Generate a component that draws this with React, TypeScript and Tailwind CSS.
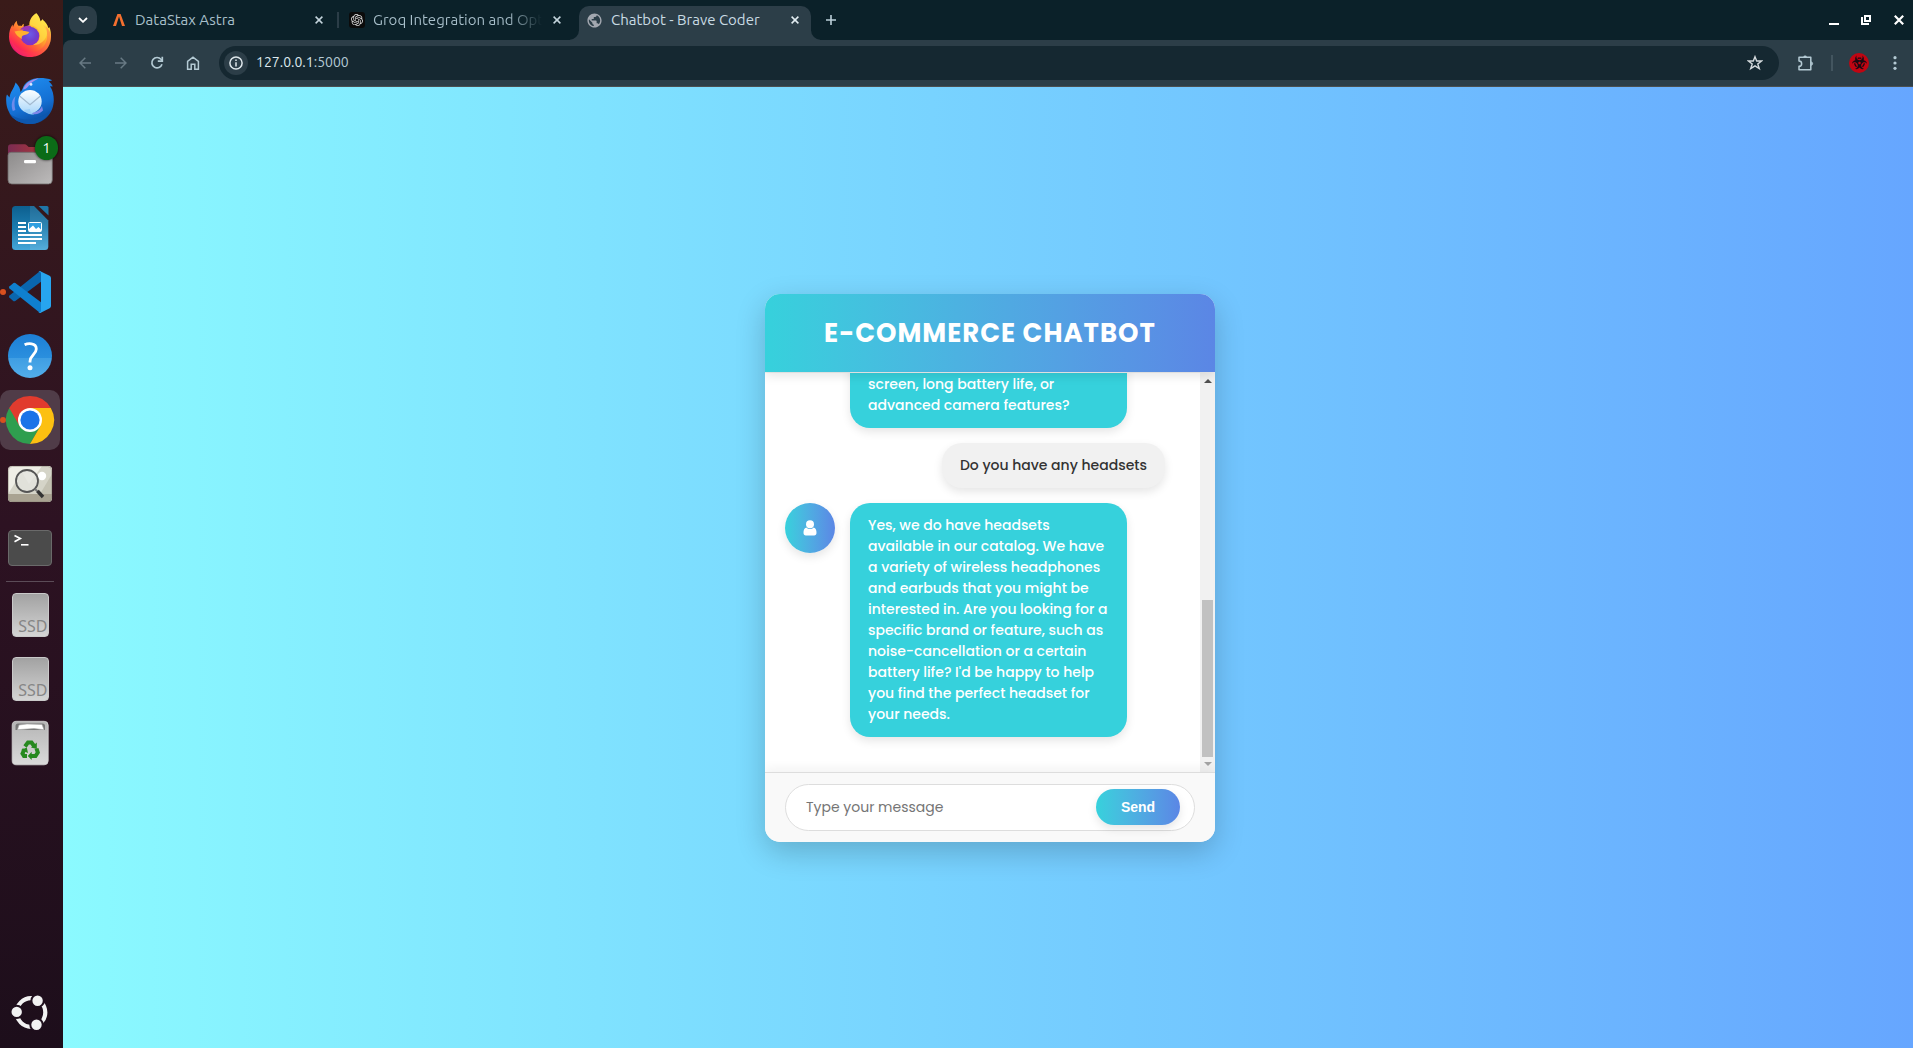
import React from "react";
import type { ReactNode } from "react";
import { FaBiohazard } from "react-icons/fa";
import { MdPublic } from "react-icons/md";
import { SiOpenai } from "react-icons/si";

const UI = "font-['Ubuntu','Noto_Sans',sans-serif]";

/* ---------- Dock icons, each drawn in a 63x64 slot ---------- */

function Slot({ children, active = false, running = false }: { children: ReactNode; active?: boolean; running?: boolean }) {
  return (
    <div className="relative h-16 w-[63px] shrink-0">
      {active && <div className="absolute left-0 top-0.5 h-[60px] w-[60px] rounded-[10px] bg-[#503c48]" />}
      {running && <div className="absolute left-0 top-[29px] h-1.5 w-[6px] rounded-full bg-[#d9501e]" />}
      <svg viewBox="0 0 63 64" className="relative block h-16 w-[63px]">{children}</svg>
    </div>
  );
}

function Firefox() {
  return (
    <Slot>
      <defs>
        <linearGradient id="ff-body" x1="0.85" y1="0.1" x2="0.2" y2="0.95">
          <stop offset="0" stopColor="#fff44f" />
          <stop offset="0.35" stopColor="#ffb62c" />
          <stop offset="0.6" stopColor="#ff6a33" />
          <stop offset="0.82" stopColor="#ff2f4e" />
          <stop offset="1" stopColor="#e0107e" />
        </linearGradient>
        <radialGradient id="ff-globe" cx="0.5" cy="0.4" r="0.6">
          <stop offset="0" stopColor="#6d5be8" />
          <stop offset="0.6" stopColor="#6f3fce" />
          <stop offset="1" stopColor="#8b2fc0" />
        </radialGradient>
      </defs>
      <path
        d="M36.3 9.3C38.5 11.5 40 14.5 40.5 17.5C41.5 16.8 42 16 42.2 15.2C46 18.5 47.8 21 48.2 24C49 23.8 49.2 23.5 49.3 23C50.8 26.5 51.2 30 51 33C50.6 44.5 41.5 53 30 53C18.5 53 9.2 44.5 9 33C8.9 27.5 10.5 23.5 12.5 20.5L13 23C14 20.3 15 18.3 16.8 16.7C16.8 18.7 17.3 20.3 18.5 21.8C19.8 21.6 20.6 21.7 21.7 21.9C22.2 20.8 22.8 20.4 24 19.8C23.3 22 23.8 23.3 24.6 24.3C26 22.2 27.6 21.6 29.3 21.2C29 16.5 32 11.5 36.3 9.3Z"
        fill="url(#ff-body)"
      />
      <path d="M43 21C47 26 48.5 32 46 38C43.5 45 37 48.5 30 48.3C20 48 13 42 11 34C12 46 19 53 30 53C42 53 51 44 51 33C51 28 48 23 43 21Z" fill="#ff3d55" opacity="0.35" />
      <path d="M36.3 9.3C31.5 12.2 29.5 17 30.2 21.2C36 21.5 40 25.5 39.8 31C39.5 37 36 40 31 41C40 42 46.5 36 47 29C47.3 24 45 20 42.2 15.2C42 16 41.5 16.8 40.5 17.5C40 14.5 38.5 11.5 36.3 9.3Z" fill="#ffe14a" opacity="0.65" />
      <circle cx="30" cy="32" r="9.3" fill="url(#ff-globe)" />
      <path d="M14.5 27.6C18 26.3 24.5 26.6 29.3 28C28.7 30 26 30.8 23.8 31.3C22 31.7 21.3 33.2 22 35C18.5 33.5 16.3 31 14.5 27.6Z" fill="#ffb02e" />
      <path d="M20 25.6C22.5 22.5 27 21 31.5 22.2C29.5 23 28.8 24.5 29.4 26.6C26 26 23 25.8 20 25.6Z" fill="#9a35b8" />
    </Slot>
  );
}

function Thunderbird() {
  return (
    <Slot>
      <defs>
        <linearGradient id="tb-body" x1="0.3" y1="0" x2="0.7" y2="1">
          <stop offset="0" stopColor="#1f8df0" />
          <stop offset="0.6" stopColor="#1470d4" />
          <stop offset="1" stopColor="#0a4a9c" />
        </linearGradient>
        <linearGradient id="tb-mail" x1="0" y1="0" x2="0" y2="1">
          <stop offset="0" stopColor="#fdfeff" />
          <stop offset="1" stopColor="#a9d7fa" />
        </linearGradient>
      </defs>
      <path
        d="M15.6 14.6C19 18 20.4 21 20.5 24C22 22.5 22 21.5 22.7 20.5C24.5 14.5 31 10 40 10C44 10 48 10.3 52.3 12.2L48.6 13.6C50.5 15 52 16.5 52.7 18.5L50 18.3C52.6 22 53.8 27 53.8 32C53.6 46 43.5 56 30 56C16 56 6.5 46 6.2 33C6.1 30 6.2 28 7 26.4L9.5 29.5C10.5 23.5 14 20.5 15.6 14.6Z"
        fill="url(#tb-body)"
      />
      <path d="M23 21.5C25 15 31.5 11 39 10.2C33.5 12.7 30 15.5 27.5 19.2C26 20.7 24.5 21.3 23 21.5Z" fill="#a491ee" />
      <path d="M12.8 43C10.6 36.5 12 31.5 15.5 28C14.2 33 14.2 37.5 15.4 42Z" fill="#6f8bea" />
      <path d="M42 38C40 42.5 36 45.5 29 43.5C32 47.3 39 47 43 42.5Z" fill="#7f86e8" />
      <path d="M9 45C17 53 37 55 50 43C44 53 37 56 30 56C21 56 13 52 9 45Z" fill="#0d57ae" />
      <circle cx="30" cy="33.6" r="11.7" fill="url(#tb-mail)" />
      <path d="M24 42C27 46.5 31 46.5 34.5 46.5C31 45.3 30 43.5 30 41Z" fill="#9ccff8" />
      <path d="M19.6 28L30 36.6L40.4 28" fill="none" stroke="#a3b9cf" strokeWidth="1.2" />
      <circle cx="31" cy="16.4" r="1.4" fill="#d9eaff" />
    </Slot>
  );
}

function Files() {
  return (
    <div className="relative h-16 w-[63px] shrink-0">
      <svg viewBox="0 0 63 64" className="block h-16 w-[63px]">
        <defs>
          <linearGradient id="fl-back" x1="0" y1="0" x2="1" y2="0">
            <stop offset="0" stopColor="#7a2b52" />
            <stop offset="1" stopColor="#b93a34" />
          </linearGradient>
          <linearGradient id="fl-front" x1="0" y1="0" x2="1" y2="1">
            <stop offset="0" stopColor="#8d8b8b" />
            <stop offset="1" stopColor="#bdbbbb" />
          </linearGradient>
        </defs>
        <path d="M8 15.5Q8 12.3 11 12.3H24.5Q26 12.3 27 13.4L28.7 15H48Q52 15 52 19V30H8Z" fill="url(#fl-back)" />
        <path d="M8 23.5Q8 20.3 11 20.3H49Q52.3 20.3 52.3 23.5V48Q52.3 52 48.5 52H11.8Q8 52 8 48Z" fill="url(#fl-front)" stroke="#6d6a6a" strokeWidth="0.8" />
        <rect x="24" y="28" width="12" height="3.2" rx="1.2" fill="#fff" />
      </svg>
      <div className={`absolute left-[35px] top-[4px] flex h-6 w-[23px] items-center justify-center rounded-full bg-[#0b6b17] text-[14px] text-white shadow-[0_0_2px_1px_rgba(0,0,0,0.4)] ${UI}`}>1</div>
    </div>
  );
}

function Writer() {
  return (
    <Slot>
      <defs>
        <linearGradient id="wr" x1="0" y1="0" x2="0" y2="1">
          <stop offset="0" stopColor="#0d5f8f" />
          <stop offset="0.5" stopColor="#1b7cb0" />
          <stop offset="1" stopColor="#45a6d8" />
        </linearGradient>
      </defs>
      <path d="M15.5 10H34L48.3 24.5V50.5Q48.3 54 45 54H15.5Q12 54 12 50.5V13.5Q12 10 15.5 10Z" fill="url(#wr)" />
      <path d="M30 10H34L48.3 24.5V50.5Q48.3 54 45 54H30Z" fill="#fff" opacity="0.09" />
      <path d="M38.5 10H47Q48.5 10 48.5 11.5V19.5Z" fill="#1f76a8" />
      <g fill="#fff">
        <rect x="18" y="26" width="8" height="2" />
        <rect x="18" y="30" width="8" height="2" />
        <rect x="18" y="34" width="8" height="2" />
        <rect x="18" y="38" width="24" height="2" />
        <rect x="18" y="42" width="24" height="2" />
        <rect x="18" y="46" width="18" height="2" />
      </g>
      <rect x="28.5" y="26.5" width="13" height="9" rx="1" fill="#2f9fe0" stroke="#fff" />
      <path d="M29 35V33L33 29.5L36 33L38.5 31L41 33.5V35.5H29Z" fill="#fff" />
    </Slot>
  );
}

function VsCode() {
  return (
    <Slot running>
      <path d="M9.3 37.5L13.5 41.2Q14.4 41.6 15.3 41L41 21.8V11.5Q40.5 10.8 39.5 11.5L9.5 35.6Q8.5 36.6 9.3 37.5Z" fill="#0a66ae" />
      <path d="M9.3 26.6L13.5 22.9Q14.4 22.4 15.3 23L41 42.3V52.5Q40.5 53.2 39.5 52.5L9.5 28.5Q8.5 27.5 9.3 26.6Z" fill="#0f80cf" />
      <path d="M39.8 11L49.6 15.7Q51 16.5 51 18V46Q51 47.5 49.6 48.3L40.3 52.9Q39.2 53.3 38.4 52.5Q40.8 53 41 50.5V13.5Q40.8 11 38.4 11.5Q39 10.6 39.8 11Z" fill="#27a5ef" />
    </Slot>
  );
}

function Help() {
  return (
    <Slot>
      <defs>
        <linearGradient id="hp" x1="0" y1="0" x2="0" y2="1">
          <stop offset="0" stopColor="#1d7fd6" />
          <stop offset="0.54" stopColor="#2a8fde" />
          <stop offset="0.55" stopColor="#3f9ee3" />
          <stop offset="1" stopColor="#52aeea" />
        </linearGradient>
      </defs>
      <circle cx="30" cy="32" r="22" fill="url(#hp)" />
      <path d="M24.6 20.8C27.5 19.4 36.3 18.2 36.3 25C36.3 30.5 30 31.3 30 37.5V38.5" fill="none" stroke="#fff" strokeWidth="2.8" />
      <circle cx="30" cy="43.8" r="2.5" fill="#fff" />
    </Slot>
  );
}

function Chrome() {
  return (
    <Slot active running>
      <path d="M30 32L9.2 20A24 24 0 0 0 30 56L40.4 38Z" fill="#2f9e4f" />
      <path d="M30 20H50.8A24 24 0 0 1 30 56L40.4 38Z" fill="#fcc011" />
      <path d="M30 20H50.8A24 24 0 0 0 9.2 20L19.6 38Z" fill="#e13b2e" />
      <circle cx="30" cy="32" r="12" fill="#fff" />
      <circle cx="30" cy="32" r="9.6" fill="#1a73e8" />
    </Slot>
  );
}

function ImageViewer() {
  return (
    <Slot>
      <clipPath id="iv">
        <rect x="8" y="14" width="44" height="36" rx="4" />
      </clipPath>
      <g clipPath="url(#iv)">
        <rect x="8" y="14" width="44" height="36" fill="#efeee6" />
        <path d="M8 42L22 20L29 32L42 14H52V42Z" fill="#d5d4c8" />
        <path d="M40 42L52 22V42Z" fill="#c3c1b2" />
        <rect x="8" y="42" width="44" height="8" fill="#a9a392" />
      </g>
      <circle cx="42" cy="24" r="4.2" fill="#fff" />
      <circle cx="27" cy="29" r="11" fill="#e3e3df" fillOpacity="0.8" stroke="#555" strokeWidth="1.8" />
      <path d="M35 37L38 40" stroke="#777" strokeWidth="2" />
      <path d="M37.5 39L43 45" stroke="#333" strokeWidth="3.4" />
      <rect x="8.4" y="14.4" width="43.2" height="35.2" rx="4" fill="none" stroke="#8d897c" strokeOpacity="0.6" strokeWidth="0.8" />
    </Slot>
  );
}

function Terminal() {
  return (
    <Slot>
      <rect x="8.5" y="14.5" width="43" height="35" rx="3.5" fill="#4b4b4b" stroke="#6a6a6a" />
      <path d="M14.5 19.5L20.3 22.6L14.5 25.7" fill="none" stroke="#fff" strokeWidth="1.7" />
      <rect x="21" y="28" width="7.5" height="1.6" fill="#fff" />
    </Slot>
  );
}

function Ssd() {
  return (
    <div className="flex h-16 w-[60px] shrink-0 items-center justify-center">
      <div className="flex h-11 w-[37px] items-end justify-end rounded-[4px] border border-[#c9c9c9] bg-linear-to-b from-[#a2a2a2] to-[#d4d4d4] pb-[1px] text-[16px] leading-[18px] text-[#868686] font-['Noto_Sans','Open_Sans',sans-serif]">SSD</div>
    </div>
  );
}

function Trash() {
  return (
    <Slot>
      <defs>
        <linearGradient id="tr" x1="0" y1="0" x2="0" y2="1">
          <stop offset="0" stopColor="#b5b5b5" />
          <stop offset="1" stopColor="#dadada" />
        </linearGradient>
      </defs>
      <rect x="12.2" y="10.3" width="36" height="43.5" rx="4" fill="url(#tr)" stroke="#d5d5d5" strokeWidth="0.8" />
      <path d="M15.5 19V15Q15.5 12.5 18 12.5H42.5Q45 12.5 45 15V19Z" fill="#777" />
      <path d="M17.5 18.7L19 14L27 13L42 13.5L44 18.7L34 17.5Z" fill="#fff" stroke="#aaa" strokeWidth="0.6" />
      <g fill="none" stroke="#27891f" strokeWidth="4">
        <path d="M25 35.5L28 31.4H31.5L34 35" />
        <path d="M36.5 37.5L37.8 41.5L35.5 45H30.5" />
        <path d="M27 45H24L22.5 42.5L24.5 38" />
      </g>
      <g fill="#27891f">
        <path d="M36.8 31.5V38L31 36.6Z" />
        <path d="M31.7 40.8V49L27.8 45Z" />
        <path d="M21 39L26.8 36.5L28 42Z" />
      </g>
    </Slot>
  );
}

function UbuntuMark() {
  return (
    <Slot>
      <circle cx="31" cy="32.5" r="14.3" fill="none" stroke="#f2f2f2" strokeWidth="4.2" />
      <g stroke="#1f0f1d" strokeWidth="2" fill="#f2f2f2">
        <circle cx="16.7" cy="31.9" r="6.2" />
        <circle cx="37.6" cy="20.7" r="6.2" />
        <circle cx="36.5" cy="44.7" r="6.2" />
      </g>
    </Slot>
  );
}

function Dock() {
  return (
    <aside className="flex h-full w-[63px] shrink-0 flex-col bg-linear-to-b from-[#3a1b19] via-[#2d1222] to-[#1d0e1b] py-1">
      <Firefox />
      <Thunderbird />
      <Files />
      <Writer />
      <VsCode />
      <Help />
      <Chrome />
      <ImageViewer />
      <Terminal />
      <div className="my-px ml-1.5 h-px w-12 shrink-0 bg-[#5b4c57]" />
      <Ssd />
      <Ssd />
      <Trash />
      <div className="flex-1" />
      <UbuntuMark />
    </aside>
  );
}

/* ---------- Browser chrome ---------- */

function CloseX({ className = "" }: { className?: string }) {
  return (
    <svg viewBox="0 0 8 8" className={`h-2 w-2 shrink-0 ${className}`} stroke="currentColor" strokeWidth="1.5">
      <path d="M0.6 0.6L7.4 7.4M7.4 0.6L0.6 7.4" />
    </svg>
  );
}

function AstraIcon() {
  return (
    <svg viewBox="0 0 12 12" className="h-3 w-3 shrink-0" fill="#f4702f">
      <path d="M4.4 0H7.6L12 12H9L6 2.6L3 12H0Z" />
    </svg>
  );
}

function TabBar() {
  return (
    <div className={`flex h-10 shrink-0 items-center bg-[#0b2129] text-[15px] text-[#a9c0cb] ${UI}`}>
      <div className="ml-1.5 flex h-7 w-7 items-center justify-center rounded-[10px] bg-[#2b3d47] text-white">
        <svg viewBox="0 0 10 6" className="h-1.5 w-[10px]" fill="none" stroke="currentColor" strokeWidth="1.8"><path d="M1 1L5 4.8L9 1" /></svg>
      </div>
      <div className="ml-4 flex w-[224px] items-center">
        <AstraIcon />
        <span className="ml-[10px] flex-1 whitespace-nowrap">DataStax Astra</span>
        <CloseX className="mr-[14px] text-[#c4d4dc]" />
      </div>
      <div className="h-4 w-0.5 bg-[#2b3d47]" />
      <div className="ml-[10px] flex w-[230px] items-center">
        <span className="flex h-4 w-4 shrink-0 items-center justify-center rounded-[3px] bg-[#0b0b0b] text-[#dedede]">
          <SiOpenai className="h-3 w-3" />
        </span>
        <span className="ml-2 w-[169px] overflow-hidden whitespace-nowrap bg-linear-to-r from-[#a9c0cb] from-80% to-transparent bg-clip-text text-transparent">Groq Integration and Opt</span>
        <CloseX className="ml-[11px] text-[#c4d4dc]" />
      </div>
      <div className="relative flex h-[34px] w-[232px] items-center self-end rounded-t-[10px] bg-[#2c3e48] pb-1.5 text-[#c9dbe4]">
        <div className="absolute -left-2.5 bottom-0 h-2.5 w-2.5 rounded-br-[10px] shadow-[4px_4px_0_3px_#2c3e48] [clip-path:inset(0)]" />
        <div className="absolute -right-2.5 bottom-0 h-2.5 w-2.5 rounded-bl-[10px] shadow-[-4px_4px_0_3px_#2c3e48] [clip-path:inset(0)]" />
        <MdPublic className="-mr-px ml-[7px] h-[17px] w-[17px] shrink-0 text-[#a3a8b0]" />
        <span className="ml-[9px] flex-1 whitespace-nowrap">Chatbot - Brave Coder</span>
        <CloseX className="mr-3 text-[#e3edf2]" />
      </div>
      <svg viewBox="0 0 10 10" className="ml-[15px] h-[10px] w-[10px]" stroke="#bcd0d9" strokeWidth="1.6"><path d="M5 0V10M0 5H10" /></svg>
      <div className="flex-1" />
      <div className="mr-[9px] flex items-center gap-[22px] text-white">
        <svg viewBox="0 0 10 10" className="h-[10px] w-[10px]"><rect y="8" width="10" height="2" fill="currentColor" /></svg>
        <svg viewBox="0 0 10 10" className="mr-px h-[10px] w-[10px]" fill="none" stroke="currentColor" strokeWidth="2"><path d="M4 1H9V6H4ZM1 2V9H8" /></svg>
        <svg viewBox="0 0 10 10" className="h-[10px] w-[10px]" stroke="currentColor" strokeWidth="2.2"><path d="M0.8 0.8L9.2 9.2M9.2 0.8L0.8 9.2" /></svg>
      </div>
    </div>
  );
}

function Toolbar() {
  return (
    <div className="flex h-[47px] shrink-0 items-center rounded-tl-lg border-b border-[#4a4f50] bg-[#2c3e48] pb-[1px] text-[#b4cad4]">
      <svg viewBox="0 0 12 12" className="ml-4 h-3 w-3 text-[#687a84]" fill="none" stroke="currentColor" strokeWidth="1.5"><path d="M12 6H1M6.3 0.7L1 6L6.3 11.3" /></svg>
      <svg viewBox="0 0 12 12" className="ml-6 h-3 w-3 text-[#687a84]" fill="none" stroke="currentColor" strokeWidth="1.5"><path d="M0 6H11M5.7 0.7L11 6L5.7 11.3" /></svg>
      <svg viewBox="0 0 14 14" className="ml-[23px] h-[14px] w-[14px]" fill="none" stroke="currentColor" strokeWidth="1.7"><path d="M12 8.3A5.2 5.2 0 1 1 11 3.3L12.5 4.9" /><path d="M12.3 0.8V5.2H7.8" /></svg>
      <svg viewBox="0 0 14 14" className="ml-[22px] h-[14px] w-[14px]" fill="none" stroke="currentColor" strokeWidth="1.5"><path d="M1.6 5.4L7 1.2L12.4 5.4V13.2H8.8V8.3H5.2V13.2H1.6Z" /></svg>
      <div className="ml-[19px] flex h-[34px] flex-1 items-center rounded-full bg-[#152831]">
        <div className="ml-[5px] flex h-6 w-6 items-center justify-center rounded-full bg-[#2c3e48] text-[#dfe8ec]">
          <svg viewBox="0 0 14 14" className="h-[14px] w-[14px]" fill="none" stroke="currentColor" strokeWidth="1.5"><circle cx="7" cy="7" r="6.1" /><path d="M7 6.2V10.4M7 3.6V5.1" /></svg>
        </div>
        <span className={`ml-2 flex-1 text-[14px] text-[#dde9ee] ${UI}`}>127.0.0.1<span className="text-[#b4cad4]">:5000</span></span>
        <svg viewBox="0 0 16 16" className="mr-4 h-4 w-4" fill="none" stroke="#d3d9dc" strokeWidth="1.4"><path d="M8 1.7L9.7 6H14.6L10.8 8.9L12.3 13.7L8 10.9L3.7 13.7L5.2 8.9L1.4 6H6.3Z" /></svg>
      </div>
      <svg viewBox="0 0 16 16" className="ml-[19px] h-4 w-4" fill="none" stroke="currentColor" strokeWidth="1.5">
        <path d="M1 2.2H12.8V14.8H1V11.3A2.6 2.6 0 0 0 1 6Z" strokeLinejoin="round" />
        <path d="M5.3 1.9A1.9 1.9 0 0 1 8.9 1.9Z" fill="currentColor" stroke="none" />
        <path d="M13.3 6.7A2 2 0 0 1 13.3 10.5Z" fill="currentColor" strokeWidth="0.6" />
      </svg>
      <div className="ml-[17px] h-4 w-0.5 bg-[#43555f]" />
      <div className="ml-4 flex h-5 w-5 items-center justify-center rounded-full bg-[#c00512] text-[#1a0a12]">
        <FaBiohazard className="h-[15px] w-[15px]" />
      </div>
      <svg viewBox="0 0 4 14" className="ml-6 mr-4 h-[14px] w-1" fill="currentColor"><circle cx="2" cy="1.7" r="1.6" /><circle cx="2" cy="7" r="1.6" /><circle cx="2" cy="12.3" r="1.6" /></svg>
    </div>
  );
}

/* ---------- Chat widget ---------- */

const reply = [
  "Yes, we do have headsets",
  "available in our catalog. We have",
  "a variety of wireless headphones",
  "and earbuds that you might be",
  "interested in. Are you looking for a",
  "specific brand or feature, such as",
  "noise-cancellation or a certain",
  "battery life? I'd be happy to help",
  "you find the perfect headset for",
  "your needs.",
];

function BotBubble({ lines, padTop = "pt-3" }: { lines: string[]; padTop?: string }) {
  return (
    <div className={`w-[277px] rounded-[20px] bg-[#36d1dc] px-[18px] pb-3 ${padTop} text-white shadow-[0_4px_10px_rgba(0,0,0,0.1)]`}>
      {lines.map((l) => (
        <p key={l} className="whitespace-nowrap">{l}</p>
      ))}
    </div>
  );
}

function ChatCard() {
  return (
    <section className="flex h-[548px] w-[450px] flex-col overflow-hidden rounded-[15px] bg-[#f9f9f9] shadow-[0_10px_30px_rgba(0,0,0,0.2)] font-['Poppins','Inter',sans-serif]">
      <header className="relative z-10 flex h-[78px] shrink-0 items-center justify-center bg-linear-to-r from-[#36d1dc] to-[#5b86e5] text-[26px] font-bold tracking-[1px] text-white shadow-[0_4px_10px_rgba(0,0,0,0.1)]">
        E-COMMERCE CHATBOT
      </header>
      <div className="flex h-[400px] shrink-0 border-t border-[#f1f1f1] bg-white">
        <div className="flex flex-1 flex-col justify-end gap-[15px] overflow-hidden pb-[35px] pl-5 pr-[35px] text-[14px] font-medium leading-[21px]">
          <div className="pl-[65px]">
            <BotBubble padTop="pt-12" lines={["screen, long battery life, or", "advanced camera features?"]} />
          </div>
          <div className="self-end rounded-[20px] bg-[#f1f1f1] px-[18px] py-3 text-[#333] shadow-[0_4px_10px_rgba(0,0,0,0.1)]">Do you have any headsets</div>
          <div className="flex gap-[15px]">
            <div className="flex h-[50px] w-[50px] shrink-0 items-center justify-center rounded-full bg-linear-to-r from-[#36d1dc] to-[#5b86e5] shadow-[0_4px_10px_rgba(0,0,0,0.1)]">
              <svg viewBox="0 0 14 16" className="h-4 w-[14px]" fill="#fff">
                <circle cx="7" cy="4.2" r="4" />
                <path d="M3.3 7.4A5 5 0 0 0 10.7 7.4C12.9 7.9 13.5 10.3 13.5 12.8C13.5 14.6 12.6 15.6 11.2 15.6H2.8C1.4 15.6 0.5 14.6 0.5 12.8C0.5 10.3 1.1 7.9 3.3 7.4Z" />
              </svg>
            </div>
            <BotBubble lines={reply} />
          </div>
        </div>
        <div className="flex w-[15px] shrink-0 flex-col items-center bg-[#f1f1f1]">
          <svg viewBox="0 0 8 4" className="mt-[6px] h-1 w-2" fill="#505050"><path d="M0 4L4 0L8 4Z" /></svg>
          <div className="flex-1" />
          <div className="h-[157px] w-[11px] bg-[#c1c1c1]" />
          <svg viewBox="0 0 8 4" className="mb-[6px] mt-[5px] h-1 w-2" fill="#a3a3a3"><path d="M0 0L4 4L8 0Z" /></svg>
        </div>
      </div>
      <footer className="relative z-10 flex flex-1 items-center border-t border-[#ddd] bg-[#f9f9f9] px-5 shadow-[0_-4px_10px_rgba(0,0,0,0.05)]">
        <div className="flex h-[47px] w-full items-center rounded-full border border-[#ddd] bg-white pl-5 pr-[14px]">
          <span className="flex-1 text-[14px] text-[#757575]">Type your message</span>
          <button className="mb-px h-9 w-[84px] rounded-[20px] bg-linear-to-r from-[#36d1dc] to-[#5b86e5] text-[14px] font-bold text-white shadow-[0_4px_10px_rgba(0,0,0,0.1)] font-['Liberation_Sans',sans-serif]">Send</button>
        </div>
      </footer>
    </section>
  );
}

export default function App() {
  return (
    <div className="flex h-[1048px] w-[1913px] overflow-hidden bg-[#0b2129]">
      <Dock />
      <div className="flex min-w-0 flex-1 flex-col">
        <TabBar />
        <Toolbar />
        <main className="flex flex-1 items-center justify-center bg-linear-to-r from-[#8bfaff] to-[#66a6ff] pl-1 pt-px">
          <ChatCard />
        </main>
      </div>
    </div>
  );
}
